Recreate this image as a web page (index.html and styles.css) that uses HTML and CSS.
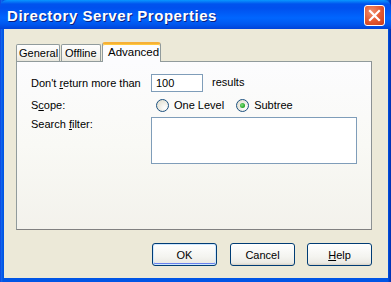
FILE: index.html
```html
<!DOCTYPE html>
<html>
<head>
<meta charset="utf-8">
<link rel="stylesheet" href="styles.css">
</head>
<body>
<div class="window">
  <div class="titlebar">
    <span class="title">Directory Server Properties</span>
    <div class="close">
      <svg width="13" height="13" viewBox="0 0 13 13"><path d="M2 2 L11 11 M11 2 L2 11" stroke="#fff" stroke-width="2.2" stroke-linecap="square"/></svg>
    </div>
  </div>
  <div class="client">
    <div class="tabs">
      <div class="tab">General</div>
      <div class="tab">Offline</div>
      <div class="tab active">Advanced</div>
    </div>
    <div class="panel">
      <div class="row r1">
        <span class="label">Don't <u>r</u>eturn more than</span>
        <div class="input">100</div>
        <span class="suffix">results</span>
      </div>
      <div class="row r2">
        <span class="label">S<u>c</u>ope:</span>
        <span class="radio"></span><span class="rtext">One Level</span>
        <span class="radio on"></span><span class="rtext">Subtree</span>
      </div>
      <div class="row r3">
        <span class="label top">Search <u>f</u>ilter:</span>
        <div class="textarea"></div>
      </div>
    </div>
    <div class="buttons">
      <div class="btn default">OK</div>
      <div class="btn">Cancel</div>
      <div class="btn"><u>H</u>elp</div>
    </div>
  </div>
</div>
</body>
</html>
```
FILE: styles.css
```css
html, body { margin: 0; padding: 0; }
body { width: 391px; height: 282px; overflow: hidden; font-family: "Liberation Sans", Arial, sans-serif; font-size: 11px; color: #000; }
.window {
  width: 391px; height: 282px; box-sizing: border-box;
  display: flex; flex-direction: column;
  background: linear-gradient(90deg, #0831d9 0, #166aee 1px, #0055e5 3px, #0055e5 388px, #0041c8 389px, #002fb0 391px);
}
.titlebar {
  height: 29px; flex: none; display: flex; align-items: center;
  padding: 0 6px 0 7px;
  background: linear-gradient(#0997ff 0, #0053ee 4px, #0050ee 8px, #0066ff 18px, #0058f0 24px, #0047dd 28px, #0042d8 29px);
  border-radius: 7px 7px 0 0;
}
.title {
  flex: 1; color: #fff; font-weight: bold; font-size: 15px;
  font-family: "Liberation Sans", Arial, sans-serif;
  text-shadow: 1px 1px 0 #0a1e80; letter-spacing: 0.55px;
  padding-top: 1px;
}
.close {
  width: 19px; height: 19px; border: 1px solid #fff; border-radius: 3px;
  background: radial-gradient(circle at 35% 30%, #f0906e 0, #e45a32 50%, #c8391a 100%);
  display: flex; align-items: center; justify-content: center; margin-top: 1px;
}
.client {
  flex: 1; margin: 0 3px 4px 4px; background: #ece9d8;
  padding: 13px 16px 0 12px; display: flex; flex-direction: column;
}
.tabs { display: flex; align-items: flex-end; height: 19px; position: relative; z-index: 1; }
.tab {
  box-sizing: border-box; height: 17px;
  border: 1px solid #919b9c; border-bottom: none; border-radius: 2px 2px 0 0;
  background: linear-gradient(#fefefe, #f4f3ee 70%, #e8e6dc);
  padding: 2px 0 0 2px; margin-right: 1px; line-height: 13px; white-space: nowrap;
}
.tab:first-child { width: 44px; }
.tab:nth-child(2) { width: 40px; padding-left: 3px; }
.tab.active {
  width: 59px; height: 20px; background: #fcfcfe; margin-bottom: -1px;
  border-top: 2px solid #f6b036; border-radius: 3px 3px 0 0;
  padding: 1px 0 0 5px; line-height: 14px; font-size: 11.5px;
  box-shadow: inset 0 1px 0 #ffc83c;
}
.panel {
  width: 356px; height: 169px; box-sizing: border-box;
  border: 1px solid #919b9c; border-right-color: #8c9294; border-bottom-color: #808080;
  background: linear-gradient(#fcfcfe 0, #f9f9f5 50%, #f3f2ec 100%);
  padding: 12px 0 0 14px; display: flex; flex-direction: column;
}
.row { display: flex; align-items: center; }
.label { width: 120px; flex: none; }
.input {
  width: 52px; height: 18px; box-sizing: border-box; border: 1px solid #7f9db9; background: #fff;
  padding: 1px 0 0 4px; line-height: 14px;
}
.suffix { margin-left: 9px; margin-top: -2px; }
.r2 { margin-top: 4px; height: 18px; }
.radio {
  width: 13px; height: 13px; box-sizing: border-box; border-radius: 50%;
  border: 1px solid #1c5180; background: radial-gradient(circle at 70% 70%, #fff 0, #f0efe8 40%, #dcd9c8 100%);
  margin-left: 5px; position: relative; flex: none;
}
.radio.on::after {
  content: ""; position: absolute; left: 3px; top: 3px; width: 5px; height: 5px; border-radius: 50%;
  background: radial-gradient(circle at 40% 40%, #7ee07e, #21a121 70%);
}
.rtext { margin-left: 5px; margin-right: 7px; }
.r2 .rtext:last-child { margin-right: 0; }
.r3 { align-items: flex-start; margin-top: 3px; }
.label.top { padding-top: 1px; }
.textarea { width: 206px; height: 47px; box-sizing: border-box; border: 1px solid #7f9db9; background: #fff; }
.buttons { display: flex; justify-content: flex-end; margin-top: 13px; gap: 13px; }
.btn {
  width: 65px; height: 23px; box-sizing: border-box; border: 1px solid #003c74; border-radius: 3px;
  background: linear-gradient(#ffffff, #f4f4f0 60%, #ebeae4 90%, #d6d0c5);
  display: flex; align-items: center; justify-content: center; padding-top: 1px;
}
.btn:last-child { margin-left: -1px; }
.btn.default { box-shadow: inset 0 0 0 1px #cee7ff, inset 0 -1px 0 1px #6982ee; }
```
